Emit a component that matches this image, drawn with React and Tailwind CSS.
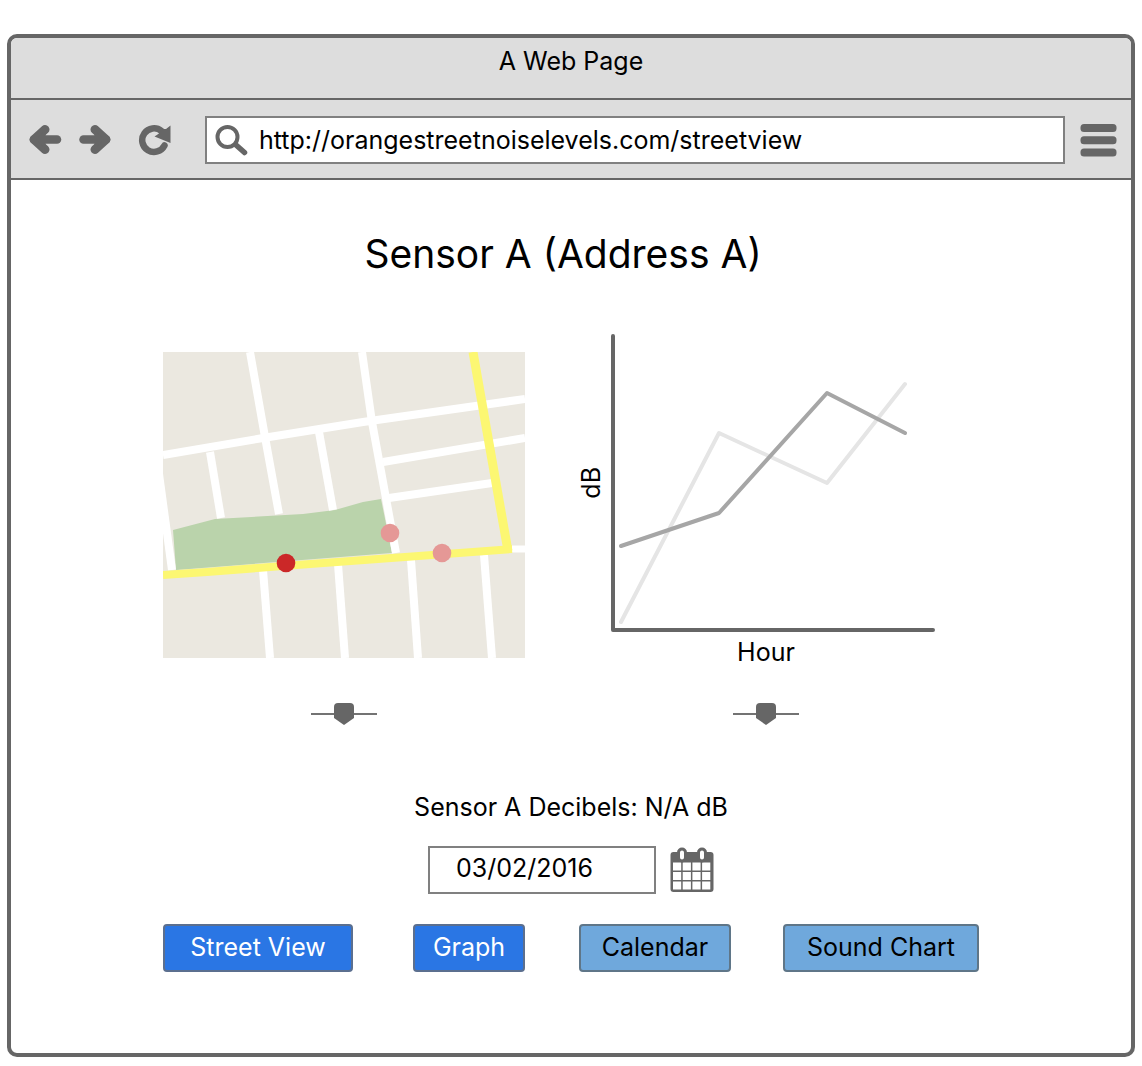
import React from "react";

const navButton = "flex h-8 w-9 items-center justify-center text-[#666666]";

function BackIcon() {
  return (
    <svg width="34" height="32" viewBox="0 0 34 32" fill="none" stroke="currentColor" strokeLinecap="round" strokeLinejoin="round" aria-hidden="true">
      <path d="M6 15.5H29" strokeWidth="8.5" />
      <path d="M17 5.5L6 15.5L17 25.5" strokeWidth="9" />
      <path d="M8 15.5L17 7V24Z" fill="currentColor" strokeWidth="1" />
    </svg>
  );
}

function ForwardIcon() {
  return (
    <svg width="34" height="32" viewBox="0 0 34 32" fill="none" stroke="currentColor" strokeLinecap="round" strokeLinejoin="round" aria-hidden="true">
      <path d="M5.5 15.5H28" strokeWidth="8.5" />
      <path d="M17 5.5L28 15.5L17 25.5" strokeWidth="9" />
      <path d="M26 15.5L17 7V24Z" fill="currentColor" strokeWidth="1" />
    </svg>
  );
}

function ReloadIcon() {
  return (
    <svg width="34" height="32" viewBox="0 0 34 32" fill="none" aria-hidden="true">
      <path d="M23.5 7A11.8 11.8 0 1 0 26.5 21.5" stroke="currentColor" strokeWidth="6.5" strokeLinecap="round" />
      <path d="M32.5 1.5V19L16.5 12.5L21 9.5L19 5H28Z" fill="currentColor" />
    </svg>
  );
}

function SearchIcon() {
  return (
    <svg width="33" height="31" viewBox="0 0 33 31" fill="none" stroke="#666666" aria-hidden="true">
      <circle cx="12.5" cy="12" r="10" strokeWidth="4" />
      <path d="M21 20L29.5 27.5" strokeWidth="5.5" strokeLinecap="round" />
    </svg>
  );
}

function MenuIcon() {
  return (
    <svg width="37" height="33" viewBox="0 0 37 33" fill="currentColor" aria-hidden="true">
      <rect x="0.5" y="0" width="36" height="8" rx="3.5" />
      <rect x="0.5" y="12.3" width="36" height="8" rx="3.5" />
      <rect x="0.5" y="24.6" width="36" height="8" rx="3.5" />
    </svg>
  );
}

function CalendarIcon() {
  return (
    <svg width="44" height="47" viewBox="0 0 44 47" aria-hidden="true">
      <rect x="0.5" y="5" width="43" height="40" rx="3" fill="#666666" />
      <g fill="#ffffff">
        {[15.5, 25, 34.5].map((y) =>
          [3, 12.7, 22.4, 32.1].map((x) => <rect key={`${x}-${y}`} x={x} y={y} width="8.2" height="8" />)
        )}
      </g>
      <g fill="#ffffff" stroke="#666666" strokeWidth="3">
        <rect x="8.5" y="2" width="7" height="12" rx="3.5" />
        <rect x="28.5" y="2" width="7" height="12" rx="3.5" />
      </g>
    </svg>
  );
}

function StreetMap() {
  return (
    <svg viewBox="0 0 362 306" className="block w-full" role="img" aria-label="Street map with sensors">
      <rect width="362" height="306" fill="#ebe8e0" />
      <path d="M10 178L52 167L140 162L172 158L200 150L218 147L229 201L13 218Z" fill="#bad3ab" />
      <g fill="none" stroke="#ffffff" strokeWidth="8">
        <path d="M0 103L100 86L200 70L362 47" />
        <path d="M87 0L102 85L116 162" />
        <path d="M199 0L209 70L233 201" />
        <path d="M47 100L58 166" />
        <path d="M156 80L170 158" />
        <path d="M220 110L362 86" />
        <path d="M226 146L329 131" />
        <path d="M-4 122L9 218" />
        <path d="M349 197H362" strokeWidth="7" />
        <path d="M100 218L107 306" />
        <path d="M175 212L182 306" />
        <path d="M248 208L255 306" />
        <path d="M321 203L329 306" />
      </g>
      <path d="M0 223L44 220L120 214L349 197" fill="none" stroke="#fcf772" strokeWidth="8" />
      <path d="M310 0L345 199" fill="none" stroke="#fcf772" strokeWidth="9" />
      <circle cx="123" cy="211" r="9.3" fill="#cb2828" />
      <circle cx="227" cy="181" r="9.3" fill="#e59896" />
      <circle cx="279" cy="201" r="9.3" fill="#e59896" />
    </svg>
  );
}

function LevelChart() {
  return (
    <svg viewBox="0 0 324 298" className="block w-full" fill="none" strokeLinejoin="round" strokeLinecap="round" role="img" aria-label="Decibels by hour">
      <path d="M10 288L108 99L216 149L294 50" stroke="#e5e5e5" strokeWidth="4" />
      <path d="M10 212L108 179L216 59L294 99" stroke="#a6a6a6" strokeWidth="4" />
      <path d="M2 2V296H322" stroke="#666666" strokeWidth="4" />
    </svg>
  );
}

function Slider({ label }) {
  return (
    <input
      type="range"
      aria-label={label}
      defaultValue="50"
      className="block h-[22px] w-[66px] appearance-none bg-transparent [&::-webkit-slider-runnable-track]:h-[2px] [&::-webkit-slider-runnable-track]:bg-[#737373] [&::-webkit-slider-thumb]:mt-[-10px] [&::-webkit-slider-thumb]:h-[22px] [&::-webkit-slider-thumb]:w-5 [&::-webkit-slider-thumb]:appearance-none [&::-webkit-slider-thumb]:rounded-t-[4px] [&::-webkit-slider-thumb]:bg-[#666666] [&::-webkit-slider-thumb]:[clip-path:polygon(0_0,100%_0,100%_68%,50%_100%,0_68%)]"
    />
  );
}

const viewButton = "h-12 rounded-[4px] border-2 pb-[2px] whitespace-nowrap";
const activeButton = "border-[#5b6f8f] bg-[#2a76e4] text-white";
const idleButton = "border-[#5f7688] bg-[#6fa8dc] text-black";

export default function App() {
  return (
    <div className="flex min-h-screen flex-col bg-white px-[7px] pt-[34px] pb-[9px] font-['Inter',sans-serif] text-[25px] leading-8 text-black">
      <div className="flex flex-1 flex-col overflow-hidden rounded-[10px] border-4 border-[#666666]">
        <header className="bg-[#dddddd]">
          <div className="flex h-[62px] items-center justify-center border-b-2 border-[#666666] pb-[14px]">A Web Page</div>
          <div className="flex h-20 items-center border-b-2 border-[#666666] pt-[2px] pr-[14px] pl-4">
            <button type="button" aria-label="Back" className={navButton}><BackIcon /></button>
            <button type="button" aria-label="Forward" className={`${navButton} ml-[14px]`}><ForwardIcon /></button>
            <button type="button" aria-label="Reload" className={`${navButton} ml-6`}><ReloadIcon /></button>
            <div className="ml-8 flex h-12 min-w-0 flex-1 items-center border-2 border-[#808080] bg-white pl-2">
              <SearchIcon />
              <input type="text" aria-label="Address" defaultValue="http://orangestreetnoiselevels.com/streetview" className="ml-[11px] h-10 min-w-0 flex-1 bg-transparent leading-10 outline-none" />
            </div>
            <button type="button" aria-label="Menu" className="ml-[14px] flex w-[38px] justify-center text-[#666666]"><MenuIcon /></button>
          </div>
        </header>

        <main className="mx-auto w-full max-w-[816px] pt-[50px]">
          <h1 className="pr-4 text-center text-[39px] leading-[48px]">Sensor A (Address A)</h1>

          <div className="mt-[56px] grid grid-cols-[362fr_54fr_400fr]">
            <section className="flex flex-col items-center justify-between pt-[18px]">
              <StreetMap />
              <Slider label="Map time" />
            </section>
            <section className="col-start-3 flex max-w-[374px] flex-col items-center">
              <div className="flex w-full items-center pr-[18px]">
                <span className="w-8 shrink-0 rotate-180 pl-[10px] leading-6 [writing-mode:vertical-rl]">dB</span>
                <div className="min-w-0 flex-1"><LevelChart /></div>
              </div>
              <div className="mt-1">Hour</div>
              <div className="mt-[35px]"><Slider label="Graph hour" /></div>
            </section>
          </div>

          <p className="mt-[66px] text-center">Sensor A Decibels: N/A dB</p>

          <div className="mt-[23px] flex items-center justify-center gap-[14px]">
            <input type="text" aria-label="Date" defaultValue="03/02/2016" className="h-12 w-[228px] border-2 border-[#808080] bg-white pb-1 pl-[26px] outline-none" />
            <button type="button" aria-label="Pick a date"><CalendarIcon /></button>
          </div>

          <nav className="mt-[30px] grid grid-cols-[362fr_54fr_400fr] pb-16" aria-label="Views">
            <div className="flex justify-between">
              <button type="button" className={`${viewButton} ${activeButton} w-[190px]`}>Street View</button>
              <button type="button" className={`${viewButton} ${activeButton} w-[112px]`}>Graph</button>
            </div>
            <div className="col-start-3 flex justify-between">
              <button type="button" className={`${viewButton} ${idleButton} w-[152px]`}>Calendar</button>
              <button type="button" className={`${viewButton} ${idleButton} w-[196px]`}>Sound Chart</button>
            </div>
          </nav>
        </main>
      </div>
    </div>
  );
}
